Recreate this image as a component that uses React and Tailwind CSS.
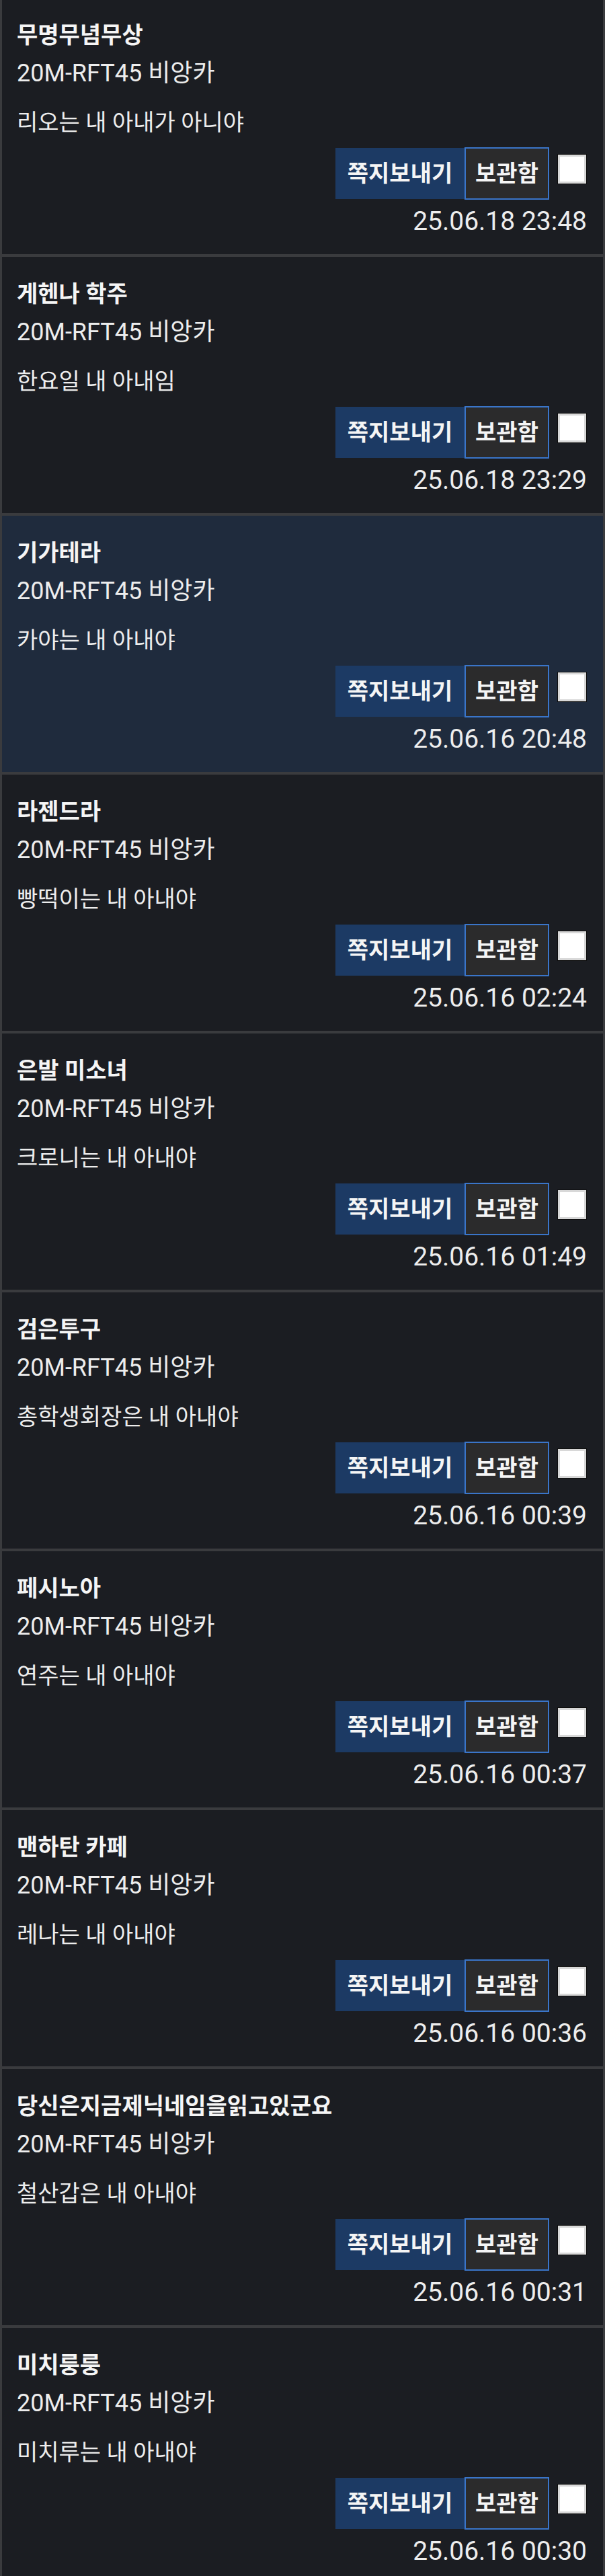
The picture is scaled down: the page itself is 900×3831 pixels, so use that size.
import React from 'react';

const messages = [
  { name: '무명무념무상', body: '리오는 내 아내가 아니야', date: '25.06.18 23:48' },
  { name: '게헨나 학주', body: '한요일 내 아내임', date: '25.06.18 23:29' },
  { name: '기가테라', body: '카야는 내 아내야', date: '25.06.16 20:48', active: true },
  { name: '라젠드라', body: '빵떡이는 내 아내야', date: '25.06.16 02:24' },
  { name: '은발 미소녀', body: '크로니는 내 아내야', date: '25.06.16 01:49' },
  { name: '검은투구', body: '총학생회장은 내 아내야', date: '25.06.16 00:39' },
  { name: '페시노아', body: '연주는 내 아내야', date: '25.06.16 00:37' },
  { name: '맨하탄 카페', body: '레나는 내 아내야', date: '25.06.16 00:36' },
  { name: '당신은지금제닉네임을읽고있군요', body: '철산갑은 내 아내야', date: '25.06.16 00:31' },
  { name: '미치룽룽', body: '미치루는 내 아내야', date: '25.06.16 00:30' },
];

const font = { fontFamily: 'Roboto, "Noto Sans CJK KR", sans-serif' };

function MessageRow({ msg }) {
  return (
    <div
      className={
        'border-x-[3px] border-b-[4px] border-[#3a3b3e] pl-[22px] pr-[24px] pt-[31px] pb-[25px] ' +
        (msg.active ? 'bg-[#1f2b3d]' : 'bg-[#1b1d22]')
      }
    >
      <div className="text-[34px] font-bold leading-[48px] text-[#f5f5f5]">{msg.name}</div>
      <div className="mt-[9px] text-[36px] leading-[48px] text-[#ededed]">20M-RFT45 비앙카</div>
      <div className="mt-[25px] text-[34px] leading-[48px] text-[#ededed]">{msg.body}</div>
      <div className="mt-[13px] flex items-center justify-end">
        <button className="h-[76px] w-[192px] bg-[#1c3a64] text-center text-[34px] font-bold leading-none text-[#f5f5f5]">
          쪽지보내기
        </button>
        <button className="h-[78px] w-[126px] border-2 border-[#3a75c9] bg-[#2b2b2c] text-center text-[34px] font-bold leading-none text-[#f5f5f5]">
          보관함
        </button>
        <div className="ml-[12px] h-[45px] w-[44px] self-start mt-[10px] border border-[#0e0e0e] bg-[#d8d8d8] p-[3px]">
          <div className="h-full w-full bg-white" />
        </div>
      </div>
      <div className="mt-[8px] text-right text-[39px] leading-[48px] text-[#ededed]">{msg.date}</div>
    </div>
  );
}

export default function App() {
  return (
    <div className="h-[3831px] w-[900px] overflow-hidden bg-[#1b1d22]" style={font}>
      <div className="-mt-[3px]">
        {messages.map((m, i) => (
          <MessageRow key={i} msg={m} />
        ))}
      </div>
    </div>
  );
}
